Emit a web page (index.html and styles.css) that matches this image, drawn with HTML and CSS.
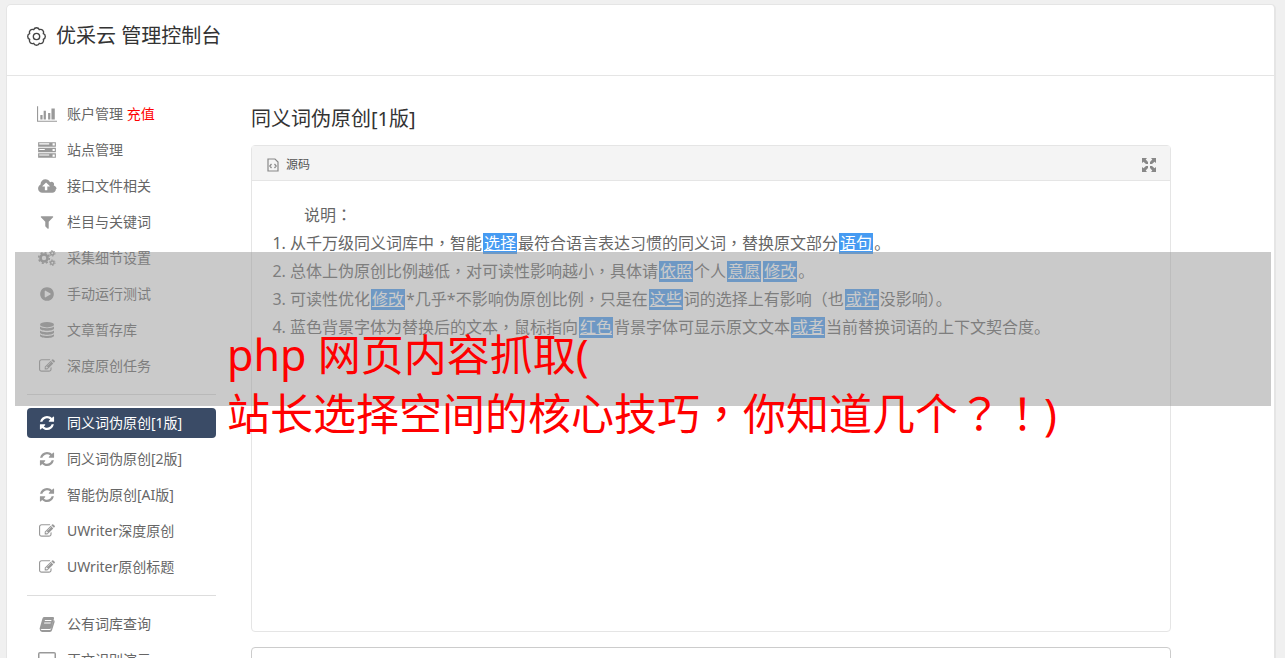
FILE: index.html
```html
<!DOCTYPE html>
<html lang="zh-CN">
<head>
<meta charset="utf-8">
<title>优采云 管理控制台</title>
<link rel="stylesheet" href="styles.css">
</head>
<body>
<svg class="sprite" aria-hidden="true">
  <symbol id="i-chart" viewBox="0 0 18 14"><path d="M0 0h1v13h17v1H0zM3 8h2v4H3zM6 4h2v8H6zM10 6h2v6h-2zM13 2h3v10h-3z"/></symbol>
  <symbol id="i-server" viewBox="0 0 18 14"><path fill-rule="evenodd" d="M1 0h16v4H1zM2 1v1h9V1zM14 1v2h2V1zM1 5h16v4H1zM2 6v1h5V6zM14 6v2h2V6zM1 10h16v4H1zM2 11v1h9v-1zM14 11v2h2v-2z"/></symbol>
  <symbol id="i-cloud" viewBox="0 0 1856 1664"><path d="M1216 864q0-14-9-23l-352-352q-9-9-23-9t-23 9l-351 351q-10 12-10 24 0 14 9 23t23 9h224v352q0 13 9.500 22.500t22.500 9.500h192q13 0 22.500-9.500t9.500-22.500v-352h224q13 0 22.500-9.500t9.500-22.500zm640 288q0 159-112.500 271.500t-271.500 112.500h-1024q-185 0-316.500-131.500t-131.500-316.500q0-130 70-240t188-165q-2-30-2-43 0-212 150-362t362-150q156 0 285.500 87t188.500 231q71-62 166-62 106 0 181 75t75 181q0 76-41 138 130 31 213.500 135.500t83.500 238.500z"/></symbol>
  <symbol id="i-filter" viewBox="0 0 1792 1792"><path d="M1595 295q17 41-14 70l-493 493v742q0 42-39 59-13 5-25 5-27 0-45-19l-256-256q-19-19-19-45v-486l-493-493q-31-29-14-70 17-39 59-39h1280q42 0 59 39z"/></symbol>
  <symbol id="i-cogs" viewBox="0 0 18 16"><g fill="none" stroke="currentColor"><circle cx="6" cy="8" r="3.500" stroke-width="2.600"/><circle cx="6" cy="8" r="5.300" stroke-width="1.600" stroke-dasharray="2.080 2.080"/><circle cx="14.300" cy="3.300" r="1.700" stroke-width="1.400"/><circle cx="14.300" cy="3.300" r="2.800" stroke-width="1" stroke-dasharray="1.460 1.460"/><circle cx="14.300" cy="12.700" r="1.700" stroke-width="1.400"/><circle cx="14.300" cy="12.700" r="2.800" stroke-width="1" stroke-dasharray="1.460 1.460"/></g></symbol>
  <symbol id="i-play" viewBox="0 0 1792 1792"><path d="M896 128q209 0 385.500 103t279.500 279.500 103 385.500-103 385.500-279.500 279.500-385.500 103-385.500-103-279.500-279.500-103-385.500 103-385.500 279.500-279.500 385.500-103zm384 823q32-18 32-55t-32-55l-544-320q-31-19-64-1-32 19-32 56v640q0 37 32 56 16 8 32 8 17 0 32-9z"/></symbol>
  <symbol id="i-db" viewBox="0 0 16 16"><ellipse cx="8" cy="2.700" rx="7" ry="2.700"/><path d="M1 4.500c2 2.300 12 2.300 14 0v2c0 3-14 3-14 0zM1 8.400c2 2.300 12 2.300 14 0v2c0 3-14 3-14 0zM1 12.200c2 2.300 12 2.300 14 0v1.500c0 3-14 3-14 0z"/></symbol>
  <symbol id="i-edit" viewBox="0 0 1792 1792"><path d="M888 1184l116-116-152-152-116 116v56h96v96h56zm440-720q-16-16-33 1l-350 350q-17 17-1 33t33-1l350-350q17-17 1-33zm80 594v190q0 119-84.500 203.500t-203.500 84.500h-832q-119 0-203.500-84.500t-84.500-203.500v-832q0-119 84.500-203.500t203.500-84.500h832q63 0 117 25 15 7 18 23 3 17-9 29l-49 49q-14 14-32 8-23-6-45-6h-832q-66 0-113 47t-47 113v832q0 66 47 113t113 47h832q66 0 113-47t47-113v-126q0-13 9-22l64-64q15-15 35-7t20 29zm-96-738l288 288-672 672h-288v-288zm444 132l-92 92-288-288 92-92q28-28 68-28t68 28l152 152q28 28 28 68t-28 68z"/></symbol>
  <symbol id="i-refresh" viewBox="-100 -100 1736 1736"><path d="M1511 928q0 5-1 7-64 268-268 434.500t-478 166.500q-146 0-282.500-55t-243.500-157l-129 129q-19 19-45 19t-45-19-19-45v-448q0-26 19-45t45-19h448q26 0 45 19t19 45-19 45l-137 137q71 66 161 102t187 36q134 0 250-65t186-179q11-17 53-117 8-23 30-23h192q13 0 22.500 9.500t9.500 22.500zm25-800v448q0 26-19 45t-45 19h-448q-26 0-45-19t-19-45 19-45l138-138q-148-137-349-137-134 0-250 65t-186 179q-11 17-53 117-8 23-30 23h-199q-13 0-22.500-9.500t-9.500-22.500v-7q65-268 270-434.500t480-166.500q146 0 284 55.500t245 156.500l130-129q19-19 45-19t45 19 19 45z"/></symbol>
  <symbol id="i-book" viewBox="0 0 16 16"><path fill-rule="evenodd" d="M5 1h9q1.500 0 1 1.500l-2.600 9q-.4 1.500-2 1.500H3q-1.500 0-1.200 1h8.900q1 0 1.300-1l2.700-9q1.300.5.900 2l-2.500 8q-.5 2-2.300 2H3Q.5 15 .6 12.500L3.300 3Q3.800 1 5 1zM6 4l-.3 1h6.500l.3-1zM5.300 6.500L5 7.500h6.500l.3-1z"/></symbol>
  <symbol id="i-screen" viewBox="0 0 18 16"><path fill-rule="evenodd" d="M2 0h14q2 0 2 2v9q0 2-2 2h-5l1 3H6l1-3H2q-2 0-2-2V2Q0 0 2 0zm-.5 1.500v8h15v-8z"/></symbol>
</svg>

<div class="panel">
  <header class="topbar">
    <svg class="gear" viewBox="-9 -9 18 18" aria-hidden="true"><path d="M6.500 2.700A2.900 2.900 0 0 1 2.700 6.500A2.900 2.900 0 0 1-2.700 6.500A2.900 2.900 0 0 1-6.500 2.700A2.900 2.900 0 0 1-6.500-2.700A2.900 2.900 0 0 1-2.700-6.500A2.900 2.900 0 0 1 2.700-6.500A2.900 2.900 0 0 1 6.500-2.700A2.900 2.900 0 0 1 6.500 2.700z"/><circle r="3"/></svg>
    <h1>优采云 管理控制台</h1>
  </header>
  <div class="layout">
    <nav class="menu">
      <a href="#"><svg><use href="#i-chart"/></svg><span>账户管理 <em>充值</em></span></a>
      <a href="#"><svg><use href="#i-server"/></svg>站点管理</a>
      <a href="#"><svg><use href="#i-cloud"/></svg>接口文件相关</a>
      <a href="#"><svg><use href="#i-filter"/></svg>栏目与关键词</a>
      <a href="#"><svg><use href="#i-cogs"/></svg>采集细节设置</a>
      <a href="#"><svg><use href="#i-play"/></svg>手动运行测试</a>
      <a href="#"><svg><use href="#i-db"/></svg>文章暂存库</a>
      <a href="#"><svg><use href="#i-edit"/></svg>深度原创任务</a>
      <hr>
      <a href="#" class="active" aria-current="page"><svg><use href="#i-refresh"/></svg>同义词伪原创[1版]</a>
      <a href="#"><svg><use href="#i-refresh"/></svg>同义词伪原创[2版]</a>
      <a href="#"><svg><use href="#i-refresh"/></svg>智能伪原创[AI版]</a>
      <a href="#"><svg><use href="#i-edit"/></svg>UWriter深度原创</a>
      <a href="#"><svg><use href="#i-edit"/></svg>UWriter原创标题</a>
      <hr>
      <a href="#"><svg><use href="#i-book"/></svg>公有词库查询</a>
      <a href="#"><svg><use href="#i-screen"/></svg>正文识别演示</a>
    </nav>
    <main class="content">
      <h2>同义词伪原创[1版]</h2>
      <section class="editor">
        <div class="toolbar">
          <button type="button"><svg class="source" viewBox="0 0 12 14" aria-hidden="true"><path d="M1 1h7l3 3v9H1zM4.500 6L2.800 8l1.700 2M7.500 6l1.700 2-1.700 2"/></svg>源码</button>
          <button type="button" aria-label="全屏"><svg class="expand" viewBox="0 0 14 14" aria-hidden="true"><path d="M0 0h5L3.700 1.500 6 4v2H4L1.500 3.700 0 5zM14 0v5l-1.500-1.300L10 6H8V4l2.300-2.500L9 0zM0 14V9l1.500 1.300L4 8h2v2l-2.300 2.500L5 14zM14 14H9l1.300-1.500L8 10V8h2l2.500 2.300L14 9z"/></svg></button>
        </div>
        <div class="document">
          <p>说明<i lang="zh-TW">：</i></p>
          <ol>
            <li>从千万级同义词库中<i lang="zh-TW">，</i>智能<mark>选择</mark>最符合语言表达习惯的同义词<i lang="zh-TW">，</i>替换原文部分<mark>语句</mark>。</li>
            <li>总体上伪原创比例越低<i lang="zh-TW">，</i>对可读性影响越小<i lang="zh-TW">，</i>具体请<mark>依照</mark>个人<mark>意愿</mark><mark>修改</mark>。</li>
            <li>可读性优化<mark>修改</mark>*几乎*不影响伪原创比例<i lang="zh-TW">，</i>只是在<mark>这些</mark>词的选择上有影响<i lang="zh-TW">（</i>也<mark>或许</mark>没影响<i lang="zh-TW">）</i>。</li>
            <li>蓝色背景字体为替换后的文本<i lang="zh-TW">，</i>鼠标指向<mark>红色</mark>背景字体可显示原文文本<mark>或者</mark>当前替换词语的上下文契合度。</li>
          </ol>
        </div>
      </section>
      <textarea class="result" aria-label="结果"></textarea>
    </main>
  </div>
</div>
<div class="caption">php 网页内容抓取(<br>站长选择空间的核心技巧<i lang="zh-TW">，</i>你知道几个<i lang="zh-TW">？！</i>)</div>
</body>
</html>
```
FILE: styles.css
```css
* { box-sizing: border-box; }

body {
  position: relative;
  height: 100vh;
  margin: 0;
  padding: 4px 9px 0 6px;
  overflow: hidden;
  background: #f0f0f0;
  color: #666;
  font: 14px/20px "Noto Sans", "Noto Sans CJK SC", sans-serif;
}

h1, h2 {
  margin: 0;
  color: #333;
  font-size: 20px;
  font-weight: 400;
  line-height: 28px;
}

/* Centred full-width punctuation */
i {
  font-family: "Noto Sans CJK TC", sans-serif;
  font-style: normal;
  line-height: 1;
}

.sprite { position: absolute; width: 0; height: 0; }

.panel {
  border: 1px solid #e5e5e5;
  border-right-width: 2px;
  border-radius: 5px;
  background: #fff;
}

.topbar {
  display: flex;
  align-items: center;
  gap: 10px;
  padding: 17px 20px 25px;
  border-bottom: 1px solid #e5e5e5;
}

.gear {
  width: 19px;
  height: 19px;
  fill: none;
  stroke: #444;
  stroke-width: 1.3;
}

.layout {
  display: flex;
  align-items: flex-start;
  gap: 35px;
  padding: 23px 103px 20px 20px;
}

.menu {
  display: flex;
  flex: 0 0 189px;
  flex-direction: column;
  gap: 6px;
}

.menu a {
  display: flex;
  align-items: center;
  gap: 10px;
  padding: 5px 10px;
  border-radius: 4px;
  color: #666;
  text-decoration: none;
}

.menu svg {
  width: 20px;
  height: 16px;
  color: #999;
  fill: currentColor;
}

.menu em { color: #f00; font-style: normal; }

.menu .active { background: #3a4b66; color: #fff; }
.menu .active svg { color: #fff; }

.menu hr {
  width: 100%;
  height: 1px;
  margin: 7px 0;
  border: 0;
  background: #ddd;
}

.content { flex: 1; min-width: 0; padding-top: 6px; }

.editor {
  min-height: 487px;
  margin: 12px 0 15px;
  border: 1px solid #e5e5e5;
  border-radius: 4px;
}

.toolbar {
  display: flex;
  align-items: center;
  justify-content: space-between;
  height: 35px;
  padding: 3px 14px 0;
  border-bottom: 1px solid #e5e5e5;
  background: #f4f4f4;
}

.toolbar button {
  display: flex;
  align-items: center;
  gap: 6px;
  padding: 0;
  border: 0;
  background: none;
  color: #555;
  font: inherit;
  font-size: 12px;
}

.source {
  width: 14px;
  height: 14px;
  fill: none;
  stroke: #888;
  stroke-width: 1.2;
}

.expand { width: 14px; height: 14px; fill: #888; }

.document {
  padding: 20px;
  font-size: 16px;
  line-height: 28px;
}

.document p { margin: 0; padding-left: 32px; }
.document ol { margin: 0; padding-left: 18px; }

.document mark {
  margin: 0 1px;
  padding: 0 1px;
  background: linear-gradient(#469bf2, #469bf2) center / 100% 21px no-repeat;
  color: #fff;
  text-decoration: underline;
}

.result {
  display: block;
  width: 100%;
  height: 120px;
  border: 1px solid #ccc;
  border-radius: 4px;
  resize: none;
}

/* Title band laid over the page */
.caption {
  position: absolute;
  top: 252px;
  right: 14px;
  left: 15px;
  height: 154px;
  padding: 73px 0 0 212px;
  background: rgba(150, 150, 150, 0.5);
  color: #f00;
  font-size: 43px;
  line-height: 59px;
  white-space: nowrap;
}
```
